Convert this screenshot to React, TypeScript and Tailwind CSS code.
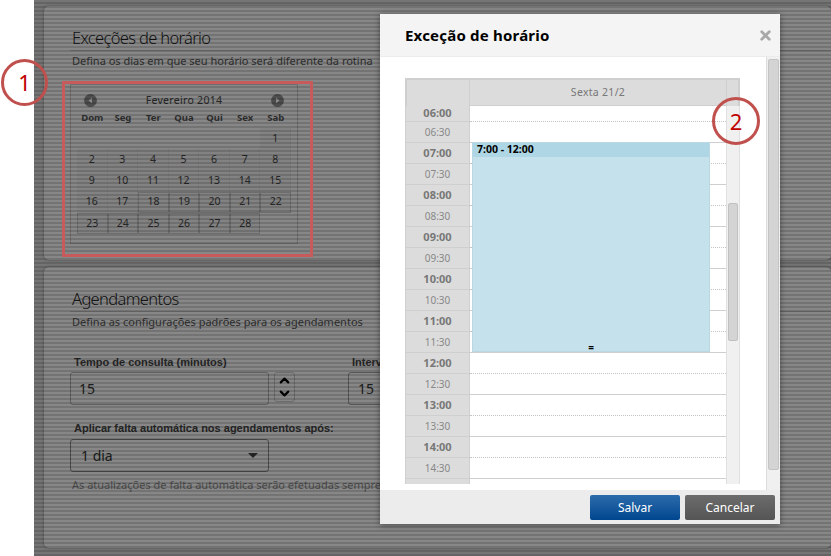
import React from 'react';
import { ChevronDown, ChevronUp, X } from 'lucide-react';

const weekDays = ['Dom', 'Seg', 'Ter', 'Qua', 'Qui', 'Sex', 'Sab'];

const slots = [
    { label: '06:00', full: true, first: true },
    { label: '06:30', full: false },
    { label: '07:00', full: true },
    { label: '07:30', full: false },
    { label: '08:00', full: true },
    { label: '08:30', full: false },
    { label: '09:00', full: true },
    { label: '09:30', full: false },
    { label: '10:00', full: true },
    { label: '10:30', full: false },
    { label: '11:00', full: true },
    { label: '11:30', full: false },
    { label: '12:00', full: true },
    { label: '12:30', full: false },
    { label: '13:00', full: true },
    { label: '13:30', full: false },
    { label: '14:00', full: true },
    { label: '14:30', full: false },
];

const NavDot = ({ left }: { left?: boolean }) => (
    <svg width="13" height="13" viewBox="0 0 13 13">
        <circle cx="6.5" cy="6.5" r="6.5" fill="#8a8a8a" />
        <path d={left ? 'M8 3.5 L4.5 6.5 L8 9.5 Z' : 'M5 3.5 L8.5 6.5 L5 9.5 Z'} fill="#f4f4f4" />
    </svg>
);

const DayCell = ({ day, outlined }: { day?: number; outlined?: boolean }) => {
    if (!day) return <div />;
    return (
        <div className={`flex items-center justify-center bg-[#e8e8e8] text-[10.5px] text-[#444] ${outlined ? 'border border-[#c2c2c2]' : 'border-r border-[#dedede]'}`}>
            {day}
        </div>
    );
};

const Calendar = () => {
    const cells: (number | undefined)[] = [...Array(6).fill(undefined), ...Array.from({ length: 28 }, (_, i) => i + 1)];
    return (
        <div className="ml-[-2px] mt-[15px] flex h-[160px] w-[228px] flex-col border border-[#c4c4c4] px-[6px]">
            <div className="mt-[8px] flex h-[15px] items-center justify-between px-[7px]">
                <NavDot left />
                <span className="text-[10.5px] tracking-[0.3px] text-[#444]">Fevereiro 2014</span>
                <NavDot />
            </div>
            <div className="grid h-[20px] grid-cols-7 items-center text-center text-[9.5px] font-bold text-[#555]">
                {weekDays.map(d => <span key={d}>{d}</span>)}
            </div>
            <div className="grid h-[106px] grid-cols-7 grid-rows-5">
                {cells.map((day, idx) => (
                    <DayCell key={idx} day={day} outlined={day !== undefined && day >= 18} />
                ))}
            </div>
        </div>
    );
};

const Card = ({ title, subtitle, className, children }: { title: string; subtitle: string; className: string; children: React.ReactNode }) => (
    <div className={`rounded-[5px] bg-[#f0f0f0] pl-[28px] pt-[20px] shadow-[0_0_3px_rgba(0,0,0,0.35)] ${className}`}>
        <h2 className="ml-[-2px] h-[25px] border-b border-[#c8c8c8] pl-[2px] text-[16.5px] font-light leading-[23px] tracking-[-0.65px] text-[#222]">{title}</h2>
        <p className="mt-[2px] whitespace-nowrap text-[11px] leading-[16px] text-[#555]">{subtitle}</p>
        {children}
    </div>
);

const FieldLabel = ({ children }: { children: React.ReactNode }) => (
    <label className="ml-[2px] block whitespace-nowrap font-['Liberation_Sans',sans-serif] text-[11px] font-bold leading-[16px] text-[#444]">{children}</label>
);

const ScheduleGrid = () => (
    <div className="relative ml-[25px] mt-[21px] h-[406px] w-[335px] overflow-hidden">
        <div className="flex h-[28px] border-x-2 border-t-2 border-[#cfcfcf] bg-[#dcdcdc]">
            <div className="w-[63px] border-r border-[#cfcfcf]" />
            <div className="flex w-[256px] items-center justify-center border-b border-[#cfcfcf] text-[10.5px] tracking-[0.3px] text-[#777]">Sexta 21/2</div>
            <div className="flex-1 border-l border-[#cfcfcf]" />
        </div>
        <div className="flex">
            <div className="w-[65px] border-x border-[#cfcfcf] bg-[#dcdcdc]">
                {slots.map(s => (
                    <div key={s.label} className={`flex items-center justify-center border-b border-[#cfcfcf] ${s.first ? 'h-[16px]' : 'h-[21px]'} ${s.full ? 'text-[11px] font-bold text-[#777]' : 'text-[10px] text-[#888]'}`}>
                        {s.label}
                    </div>
                ))}
                <div className="h-[6px]" />
            </div>
            <div className="w-[256px] bg-white">
                {slots.map(s => (
                    <div key={s.label} className={`${s.first ? 'h-[16px]' : 'h-[21px]'} ${s.full ? 'border-b border-dotted border-[#c4c4c4]' : 'border-b border-[#cfcfcf]'}`} />
                ))}
            </div>
            <div className="relative h-[380px] w-[14px] border-x border-[#e0e0e0] bg-[#f0f0f0]">
                <div className="absolute left-[1px] top-[97px] h-[138px] w-[10px] rounded-[2px] border border-[#c0c0c0] bg-[#d4d4d4]" />
            </div>
        </div>
        <div className="absolute left-[67px] top-[64px] flex h-[210px] w-[238px] flex-col items-center border border-[#b9d8e4] bg-[#c5e2ec]">
            <div className="flex h-[14px] w-full items-center bg-[#aed6e4] pl-[4px] text-[10.5px] font-bold text-black">7:00 - 12:00</div>
            <span className="mt-auto mb-[-1px] text-[10px] font-bold leading-[10px] text-black">=</span>
        </div>
    </div>
);

const Modal = () => (
    <div className="absolute left-[380px] top-[14px] flex h-[510px] w-[400px] flex-col bg-white shadow-[0_1px_6px_rgba(0,0,0,0.45)]">
        <div className="flex h-[43px] shrink-0 items-center justify-between border-b border-[#ececec] bg-[#f4f4f4] pl-[25px] pr-[7px]">
            <h3 className="pt-[1px] text-[15px] font-bold tracking-[0.2px] text-black">Exceção de horário</h3>
            <X size={15} strokeWidth={4.5} className="text-[#a8a8a8]" />
        </div>
        <div className="flex min-h-0 flex-1">
            <ScheduleGrid />
            <div className="ml-auto w-[14px] border-l border-[#dcdcdc] bg-[#f0f0f0] pl-[1px] pt-[2px]">
                <div className="h-[411px] w-[11px] rounded-[2px] border border-[#c4c4c4] bg-[#d4d4d4]" />
            </div>
        </div>
        <div className="flex h-[34px] shrink-0 items-center justify-end gap-[5px] bg-[#ececec] pr-[5px]">
            <button className="h-[25px] w-[90px] rounded-[2px] bg-gradient-to-b from-[#2a6cab] to-[#00468f] pt-[1px] text-[12px] text-white">Salvar</button>
            <button className="h-[25px] w-[90px] rounded-[2px] bg-gradient-to-b from-[#6c6c6c] to-[#555] pt-[1px] text-[12px] text-white">Cancelar</button>
        </div>
    </div>
);

export default function App() {
    return (
        <div className="relative flex h-[556px] w-[831px] overflow-hidden bg-white font-['Noto_Sans',sans-serif]">
            <div className="w-[34px] shrink-0" />
            <main className="flex flex-1 flex-col gap-[7px] bg-[#d0d0d0] pl-[10px] pt-[6px]">
                <Card title="Exceções de horário" subtitle="Defina os dias em que seu horário será diferente da rotina" className="h-[254px]">
                    <Calendar />
                </Card>
                <Card title="Agendamentos" subtitle="Defina as configurações padrões para os agendamentos" className="h-[281px]">
                    <div className="mt-[24px] flex">
                        <div>
                            <FieldLabel>Tempo de consulta (minutos)</FieldLabel>
                            <div className="ml-[-2px] mt-[2px] flex gap-[5px]">
                                <div className="flex h-[33px] w-[199px] items-center rounded-[3px] border border-[#aaa] pl-[8px] text-[14px] text-[#333]">15</div>
                                <div className="flex h-[30px] w-[21px] flex-col items-center justify-center rounded-[3px] border border-[#c0c0c0] text-black">
                                    <ChevronUp size={15} strokeWidth={3.5} className="mb-[-1px]" />
                                    <ChevronDown size={15} strokeWidth={3.5} className="mt-[-1px]" />
                                </div>
                            </div>
                        </div>
                        <div className="ml-[55px]">
                            <FieldLabel>Intervalo</FieldLabel>
                            <div className="ml-[-2px] mt-[2px] flex h-[33px] w-[199px] items-center rounded-[3px] border border-[#999] pl-[9px] text-[14px] text-[#333]">15</div>
                        </div>
                    </div>
                    <div className="mt-[15px]">
                        <FieldLabel>Aplicar falta automática nos agendamentos após:</FieldLabel>
                    </div>
                    <div className="ml-[-2px] mt-[3px] flex h-[33px] w-[199px] items-center justify-between rounded-[3px] border border-[#888] pl-[10px] pr-[8px] text-[14px] text-[#333]">
                        <span>1 dia</span>
                        <span className="mr-[2px] h-0 w-0 border-x-[5px] border-t-[5px] border-x-transparent border-t-[#444]" />
                    </div>
                    <p className="mt-[5px] whitespace-nowrap text-[11px] leading-[16px] text-[#888]">As atualizações de falta automática serão efetuadas sempre</p>
                </Card>
            </main>

            {/* backdrop over the page, stripes show through the text too */}
            <div className="absolute bottom-0 left-[34px] right-0 top-0 bg-[repeating-linear-gradient(to_bottom,rgba(0,0,0,0.44)_0px,rgba(0,0,0,0.44)_2px,rgba(0,0,0,0.52)_2px,rgba(0,0,0,0.52)_4px)]" />

            <Modal />

            <div className="absolute left-[62px] top-[81px] h-[176px] w-[251px] border-[3px] border-[#c75a5a]" />
            <div className="absolute left-[1px] top-[59px] flex h-[47px] w-[47px] items-center justify-center rounded-full border-[3px] border-[#c0504d] text-[22px] text-[#c00000]">1</div>
            <div className="absolute left-[712px] top-[97px] flex h-[48px] w-[48px] items-center justify-center rounded-full border-[3px] border-[#c0504d] text-[22px] text-[#c00000]">2</div>
        </div>
    );
}
